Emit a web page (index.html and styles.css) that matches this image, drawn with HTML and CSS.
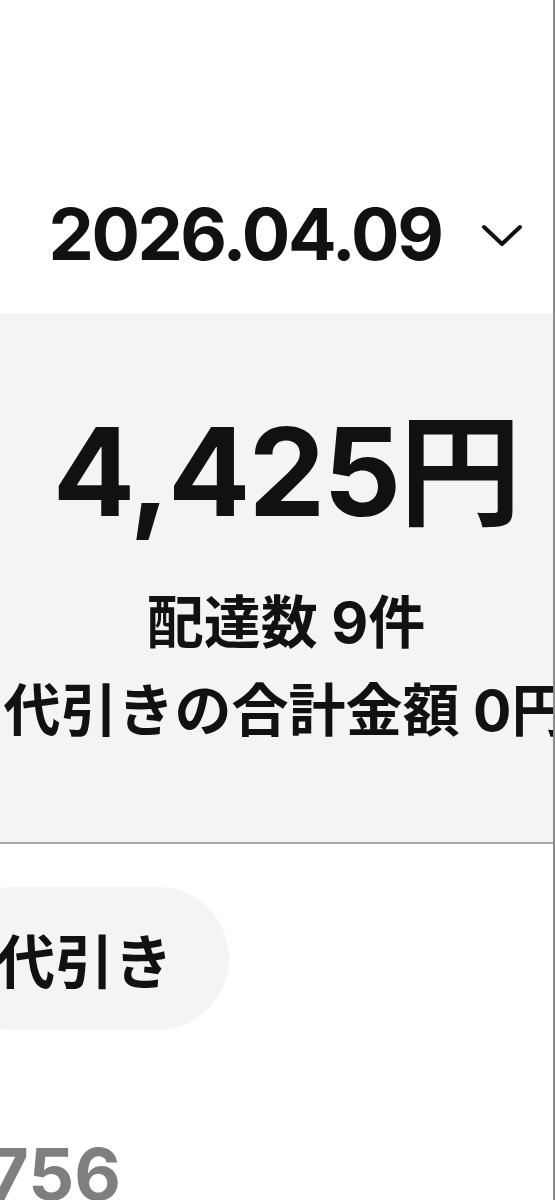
FILE: index.html
```html
<!DOCTYPE html>
<html lang="ja">
<head>
<meta charset="utf-8">
<title>配達サマリー</title>
<link rel="stylesheet" href="styles.css">
</head>
<body>
<div class="page">
  <div class="inner">
    <header class="header">
      <div class="date-row">
        <span class="date">2026.04.09</span>
        <svg class="chevron" width="42" height="24" viewBox="0 0 42 24" aria-hidden="true">
          <path d="M3 3 L21 20 L39 3" fill="none" stroke="#111" stroke-width="4" stroke-linecap="round" stroke-linejoin="round"/>
        </svg>
      </div>
    </header>
    <section class="summary">
      <div class="amount">4,425円</div>
      <div class="stat">配達数 9件</div>
      <div class="stat">代引きの合計金額 0円</div>
    </section>
    <section class="list">
      <div class="pill-row">
        <span class="pill">代引き</span>
      </div>
      <div class="number">756</div>
    </section>
  </div>
</div>
</body>
</html>
```

FILE: styles.css
```css
html, body {
  margin: 0;
  padding: 0;
  background: #ffffff;
}

body {
  font-family: "Inter", "Noto Sans CJK JP", sans-serif;
  color: #111111;
}

.page {
  width: 553px;
  height: 1200px;
  border-right: 2px solid #8c8c8c;
  overflow: hidden;
}

.inner {
  width: 572px;
}

.header {
  height: 313px;
  box-sizing: border-box;
  padding-top: 197px;
}

.date-row {
  display: flex;
  justify-content: center;
  align-items: center;
  gap: 40px;
  height: 73px;
}

.date {
  font-size: 72px;
  line-height: 1;
  font-weight: 700;
  letter-spacing: -2.5px;
}

.chevron {
  display: block;
  margin-top: 4px;
}

.summary {
  background: #f4f4f4;
  border-bottom: 2px solid #ababab;
  padding: 98px 0 87px;
  text-align: center;
  white-space: nowrap;
}

.amount {
  font-size: 122px;
  line-height: 122px;
  font-weight: 700;
  letter-spacing: -2px;
  margin-bottom: 46px;
}

.stat {
  font-size: 57px;
  line-height: 88px;
  font-weight: 700;
}

.list {
  padding-top: 43px;
}

.pill-row {
  display: flex;
}

.pill {
  display: inline-flex;
  align-items: center;
  height: 143px;
  margin-left: -60px;
  padding: 0 56px 0 56px;
  background: #f4f4f4;
  border-radius: 72px;
  font-size: 59px;
  font-weight: 700;
  white-space: nowrap;
}

.number {
  margin-top: 108px;
  margin-left: -13px;
  font-size: 72px;
  line-height: 1;
  font-weight: 700;
  color: #7f7f7f;
}
```
